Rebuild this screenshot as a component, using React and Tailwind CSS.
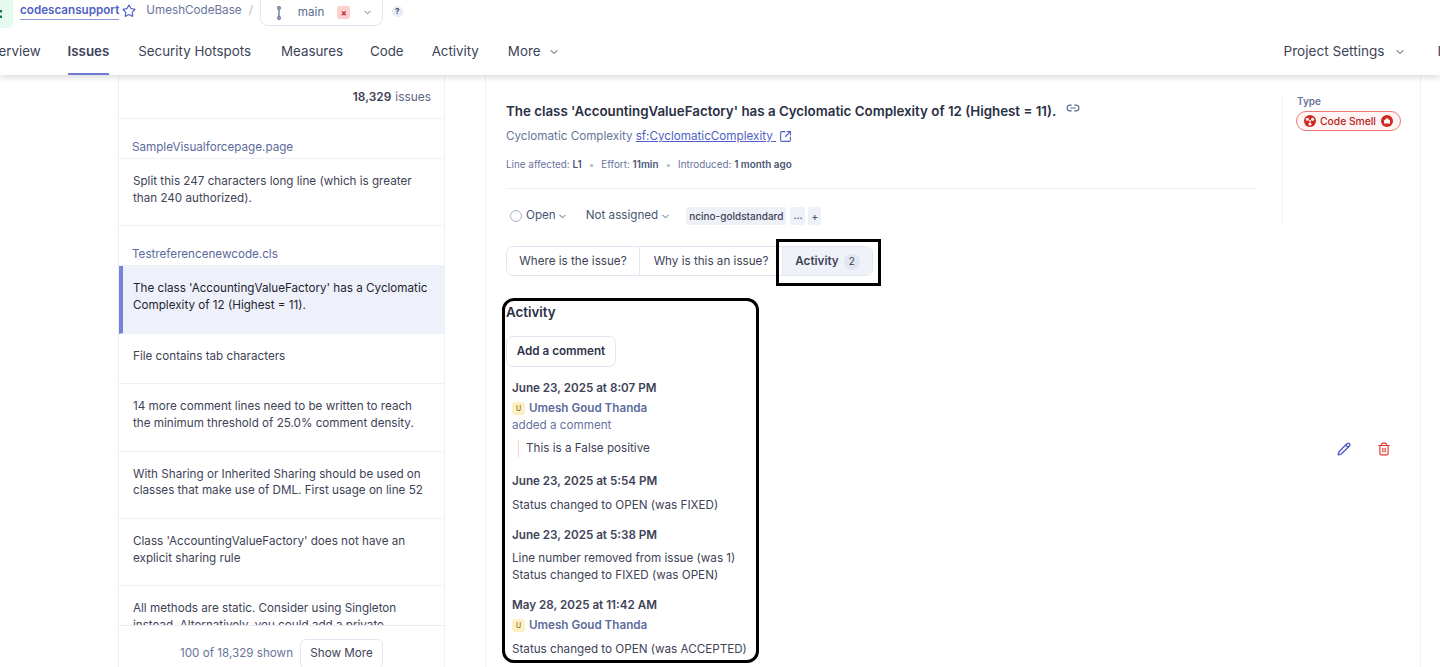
import { ChevronDown, Star, Link2, SquareArrowOutUpRight, Pencil, Trash2 } from 'lucide-react';

const issues = [
  { file: 'SampleVisualforcepage.page', text: "Split this 247 characters long line (which is greater than 240 authorized)." },
  { file: 'Testreferencenewcode.cls', text: "The class 'AccountingValueFactory' has a Cyclomatic Complexity of 12 (Highest = 11).", active: true },
  { text: 'File contains tab characters' },
  { text: '14 more comment lines need to be written to reach the minimum threshold of 25.0% comment density.' },
  { text: 'With Sharing or Inherited Sharing should be used on classes that make use of DML. First usage on line 52' },
  { text: "Class 'AccountingValueFactory' does not have an explicit sharing rule" },
  { text: 'All methods are static. Consider using Singleton instead. Alternatively, you could add a private constructor' },
];

function Avatar() {
  return (
    <span className="w-[13px] h-[13px] rounded-[3px] bg-[#fdf0c4] text-[#8a6d1f] text-[7px] font-medium flex items-center justify-center mr-[4px]">U</span>
  );
}

function SmellIcon() {
  return (
    <svg width="12" height="12" viewBox="0 0 12 12" className="mr-[4px] shrink-0">
      <circle cx="6" cy="6" r="6" fill="#d02b22" />
      <circle cx="6" cy="6" r="1" fill="#fff" />
      <circle cx="3.4" cy="4.2" r="1.5" fill="#fff" />
      <circle cx="8.6" cy="4.2" r="1.5" fill="#fff" />
      <circle cx="6" cy="9" r="1.5" fill="#fff" />
    </svg>
  );
}

function SeverityIcon() {
  return (
    <svg width="12" height="12" viewBox="0 0 12 12" className="ml-[5px] shrink-0">
      <circle cx="6" cy="6" r="6" fill="#d02b22" />
      <path d="M6 3 L9 5.4 V8.6 H3 V5.4 Z" fill="#fff" />
    </svg>
  );
}

function Header() {
  return (
    <header className="h-[75px] shrink-0 bg-white shadow-[0_2px_7px_rgba(0,0,0,0.16)] relative z-10">
      <div className="h-[27px] pb-[5px] flex items-center text-[11.67px]">
        <div className="self-start w-[13px] h-[28px] bg-[#e6f9ee] rounded-br-[4px] mr-[7px] pt-[10px]">
          <svg width="3" height="8" viewBox="0 0 3 8" fill="#0d7a4a"><rect width="2" height="2.5" /><rect y="5.5" width="2" height="2.5" /></svg>
        </div>
        <span className="font-semibold text-[#4f5fc4] border-b border-[#8b96dc] leading-[17px]">codescansupport</span>
        <Star size={14} className="text-[#4f5fc4] ml-[3px]" />
        <span className="text-[#69759c] ml-[10px]">UmeshCodeBase</span>
        <span className="text-[#b4bbd0] ml-[7px]">/</span>
        <div className="self-start ml-[7px] w-[123px] h-[26px] border border-t-0 border-[#e1e6f3] rounded-b-[8px] flex items-center pl-[13px] shrink-0">
          <svg width="10" height="14" viewBox="0 0 10 14" fill="none" stroke="#5d6c8f" strokeWidth="1.3"><circle cx="5" cy="2" r="1.3" /><circle cx="5" cy="12" r="1.3" /><path d="M5 3.5v7" /></svg>
          <span className="text-[#5d6c8f] ml-[14px]">main</span>
          <span className="ml-[13px] w-[13px] h-[13px] bg-[#fdd0d0] rounded-[2px] text-[#c1272d] text-[9px] font-bold flex items-center justify-center">×</span>
          <ChevronDown size={11} className="text-[#5d6c8f] ml-[12px]" />
        </div>
        <span className="ml-[9px] w-[11px] h-[11px] rounded-full bg-[#e8ebf5] text-[#3e4a6b] text-[8px] font-bold flex items-center justify-center">?</span>
      </div>
      <nav className="h-[48px] pt-[1px] flex items-center text-[13.33px] text-[#3e4357] -ml-[19px] whitespace-nowrap">
        <span>Overview</span>
        <div className="relative ml-[27px] h-full flex items-center font-semibold">
          Issues
          <span className="absolute left-0 right-0 bottom-0 h-[2px] bg-[#6d7bd6]" />
        </div>
        <span className="ml-[29px]">Security Hotspots</span>
        <span className="ml-[30px]">Measures</span>
        <span className="ml-[27px]">Code</span>
        <span className="ml-[28px]">Activity</span>
        <span className="ml-[29px]">More</span>
        <ChevronDown size={12} className="ml-[8px] shrink-0" />
        <span className="ml-[723px] text-[13.6px]">Project Settings</span>
        <ChevronDown size={12} className="ml-[9px] shrink-0" />
        <span className="ml-[32px] text-[13.6px]">Project Information</span>
      </nav>
    </header>
  );
}

function Sidebar() {
  return (
    <aside className="ml-[118px] w-[327px] shrink-0 border-x border-[#eef0f8] flex flex-col min-h-0">
      <div className="h-[44px] shrink-0 flex items-center justify-end pr-[13px] text-[11.9px] text-[#5b6480] border-b border-[#eef0f8]">
        <span className="font-semibold text-[#3e4357] mr-[4px]">18,329</span> issues
      </div>
      <div className="flex-1 min-h-0 overflow-hidden">
        {issues.map((it) => (
          <div key={it.text}>
            {it.file && (
              <div className="h-[40px] pt-[19px] pl-[13px] text-[11.67px] leading-[18px] text-[#5d6b9c] border-b border-[#eef0f8]">{it.file}</div>
            )}
            <div className={`pr-[14px] pt-[14px] pb-[19px] text-[11.67px] leading-[16.67px] border-b border-[#eef0f8] ${it.active ? 'bg-[#eef1f9] border-l-[4px] border-l-[#7583dc] pl-[10px] text-[#1f2433]' : 'pl-[14px] text-[#3e4357]'}`}>
              {it.text}
            </div>
          </div>
        ))}
      </div>
      <div className="h-[42px] shrink-0 bg-white border-t border-[#e9ebf3] flex items-start justify-center pt-[13px] text-[11.67px] text-[#69759c]">
        <span className="h-[30px] flex items-center">100 of 18,329 shown</span>
        <span className="ml-[7px] w-[83px] h-[30px] shrink-0 border border-[#e1e6f3] rounded-[6px] text-[#3e4357] flex items-center justify-center">Show More</span>
      </div>
    </aside>
  );
}

function Activity() {
  return (
    <div className="w-[257px] h-[365px] mt-[22px] -ml-[4px] border-[3px] border-black rounded-[12px] text-[11.67px] leading-[17px] text-[#3e4357] shrink-0">
      <h3 className="text-[13.33px] font-semibold leading-[20px] pt-[1px] pl-[1px] text-[#2a2f45]">Activity</h3>
      <button className="block ml-[1px] mt-[14px] h-[31px] w-[110px] border border-[#e1e6f3] rounded-[7px] font-semibold text-[#2f3449]">Add a comment</button>
      <div className="pl-[7px] pt-[13px]">
        <p className="font-semibold leading-[17px]">June 23, 2025 at 8:07 PM</p>
        <p className="flex items-center mt-[3px] font-semibold text-[#5d6b9c]"><Avatar />Umesh Goud Thanda</p>
        <p className="text-[#69759c]">added a comment</p>
        <p className="mt-[6px] ml-[6px] pl-[7px] border-l border-[#f6d5c6]">This is a False positive</p>
        <p className="font-semibold mt-[16px]">June 23, 2025 at 5:54 PM</p>
        <p className="mt-[7px]">Status changed to OPEN (was FIXED)</p>
        <p className="font-semibold mt-[13px]">June 23, 2025 at 5:38 PM</p>
        <p className="mt-[6px]">Line number removed from issue (was 1)</p>
        <p>Status changed to FIXED (was OPEN)</p>
        <p className="font-semibold mt-[13px]">May 28, 2025 at 11:42 AM</p>
        <p className="flex items-center mt-[3px] font-semibold text-[#5d6b9c]"><Avatar />Umesh Goud Thanda</p>
        <p className="mt-[7px]">Status changed to OPEN (was ACCEPTED)</p>
      </div>
    </div>
  );
}

function Main() {
  return (
    <main className="ml-[40px] w-[936px] shrink-0 border-x border-[#eef0f8] pl-[20px] relative">
      <div className="flex">
        <div className="w-[751px] pt-[25px] h-[114px] border-b border-[#eef0f8] shrink-0">
          <div className="flex items-start">
            <h1 className="text-[13.33px] font-semibold leading-[22px] text-[#2a2f45]">The class 'AccountingValueFactory' has a Cyclomatic Complexity of 12 (Highest = 11).</h1>
            <Link2 size={14} className="ml-[10px] mt-[1px] text-[#5d6b8f]" />
          </div>
          <div className="flex items-center mt-[5px] text-[11.67px] leading-[18px] text-[#69759c]">
            Cyclomatic Complexity
            <span className="ml-[3px] text-[#4f5fc4] underline">sf:CyclomaticComplexity&nbsp;</span>
            <SquareArrowOutUpRight size={13} className="ml-[3px] text-[#4f5fc4]" />
          </div>
          <div className="flex items-center mt-[12px] text-[9.9px] leading-[14px] text-[#69759c]">
            Line affected:&nbsp;<b className="font-semibold text-[#4b5675]">L1</b>
            <span className="mx-[7px] text-[#b4bbd0]">•</span>
            Effort:&nbsp;<b className="font-semibold text-[#4b5675]">11min</b>
            <span className="mx-[7px] text-[#b4bbd0]">•</span>
            Introduced:&nbsp;<b className="font-semibold text-[#4b5675]">1 month ago</b>
          </div>
        </div>
        <div className="ml-[25px] mt-[20px] w-[130px] h-[130px] border-l border-[#eef0f8] pl-[14px]">
          <p className="text-[10px] font-semibold leading-[13px] text-[#69759c]">Type</p>
          <span className="mt-[3px] -ml-[1px] w-[105px] h-[20px] rounded-full border border-[#ec7a72] bg-[#fff5f4] flex items-center pl-[7px] text-[10.3px] font-medium text-[#b8231c] whitespace-nowrap">
            <SmellIcon />
            <span className="pt-[1px]">Code Smell</span>
            <SeverityIcon />
          </span>
        </div>
      </div>
      <div className="flex items-center -mt-[20px] relative h-[22px] text-[11.67px] text-[#4b5675]">
        <span className="ml-[4px] w-[12px] h-[12px] rounded-full border border-[#aab3cf] mr-[4px]" />
        Open
        <ChevronDown size={11} className="ml-[1px]" />
        <span className="ml-[18px]">Not assigned</span>
        <ChevronDown size={11} className="ml-[2px]" />
        <span className="ml-[15px] h-[18px] px-[3px] bg-[#eff1f8] rounded-[2px] text-[10px] font-medium leading-[18px] text-[#3e4357]">ncino-goldstandard</span>
        <span className="ml-[4px] w-[15px] h-[18px] bg-[#eff1f8] rounded-[2px] text-[10px] font-medium text-center leading-[16px]">...</span>
        <span className="ml-[3px] w-[13px] h-[18px] bg-[#eff1f8] rounded-[2px] text-[10px] font-medium text-center leading-[18px]">+</span>
      </div>
      <div className="relative mt-[19px] w-[367px] h-[30px] flex border border-[#e1e6f3] rounded-[7px] text-[11.67px] text-[#3e4357]">
        <span className="w-[133px] pt-[1px] flex items-center justify-center border-r border-[#e1e6f3]">Where is the issue?</span>
        <span className="w-[142px] pt-[1px] flex items-center justify-center">Why is this an issue?</span>
        <span className="flex-1 pt-[1px] flex items-center justify-center border-l border-[#e1e6f3] bg-[#eff2f9] rounded-r-[7px] font-semibold">
          Activity
          <span className="ml-[5px] w-[16px] h-[16px] rounded-full bg-[#e1e6f3] text-[10px] font-normal flex items-center justify-center">2</span>
        </span>
        <span className="absolute left-[269px] -top-[8px] w-[105px] h-[47px] border-[3px] border-black" />
      </div>
      <Activity />
      <div className="absolute left-[851px] top-[367px] flex items-center gap-[26px]">
        <Pencil size={14} strokeWidth={2.4} className="text-[#4f5fc4]" />
        <Trash2 size={14} className="text-[#e0342c]" />
      </div>
    </main>
  );
}

export default function App() {
  return (
    <div className="w-[1440px] h-[667px] overflow-hidden flex flex-col bg-white font-['Inter',sans-serif]">
      <Header />
      <div className="flex flex-1 min-h-0">
        <Sidebar />
        <Main />
      </div>
    </div>
  );
}
